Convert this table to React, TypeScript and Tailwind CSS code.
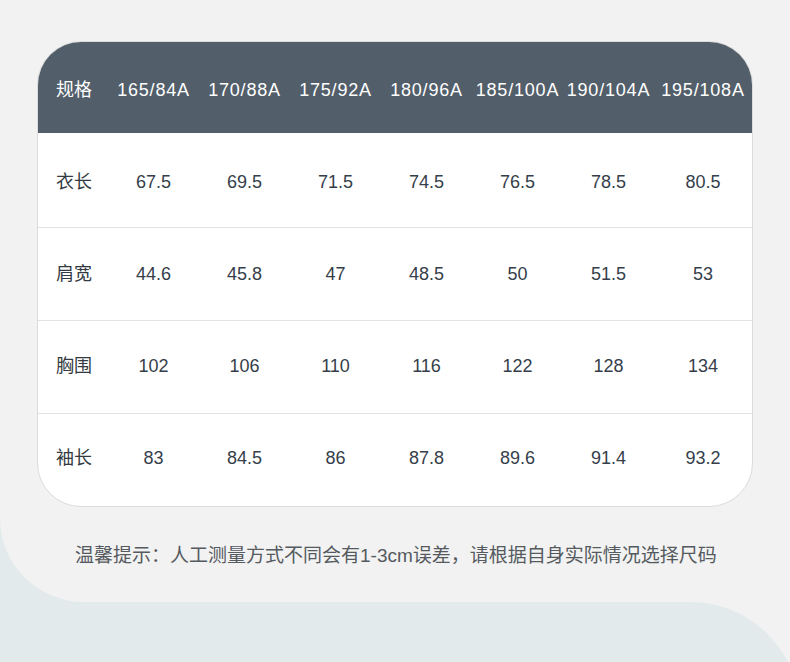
const sizes = ["165/84A", "170/88A", "175/92A", "180/96A", "185/100A", "190/104A", "195/108A"]

const rows = [
  { label: "衣长", values: ["67.5", "69.5", "71.5", "74.5", "76.5", "78.5", "80.5"], h: "h-[94px] pt-[5px]" },
  { label: "肩宽", values: ["44.6", "45.8", "47", "48.5", "50", "51.5", "53"], h: "h-[93px]" },
  { label: "胸围", values: ["102", "106", "110", "116", "122", "128", "134"], h: "h-[93px] pb-[2px]" },
  { label: "袖长", values: ["83", "84.5", "86", "87.8", "89.6", "91.4", "93.2"], h: "h-[93px] pb-[4px]" },
]

const font = "font-['Liberation_Sans','Noto_Sans_CJK_SC',sans-serif]"

export default function App() {
  return (
    <div className={`w-[790px] h-[662px] overflow-hidden bg-[#f2f2f2] ${font}`}>
      {/* top panel */}
      <div className="bg-[#e3eaec]">
        <div className="h-[602px] rounded-bl-[84px] bg-[#f2f2f2] px-[37px] pt-[41px]">
          <div className="overflow-hidden rounded-[44px] border border-[#dcdcdc] bg-white">
            <div className="flex h-[91px] items-center bg-[#525e69] pt-[6px] text-[18px] tracking-[0.8px] text-white">
              <div className="w-[70px] shrink-0 pl-[18px] tracking-normal">规格</div>
              {sizes.map((s, i) => (
                <div key={s} className={`${i === 6 ? "flex-1" : "w-[91px]"} shrink-0 text-center`}>
                  {s}
                </div>
              ))}
            </div>
            {rows.map((r, ri) => (
              <div
                key={r.label}
                className={`flex ${r.h} items-center text-[18px] ${ri > 0 ? "border-t border-[#e3e3e3]" : ""}`}
              >
                <div className="w-[70px] shrink-0 pl-[18px] text-[#333a42]">{r.label}</div>
                {r.values.map((v, i) => (
                  <div key={i} className={`${i === 6 ? "flex-1" : "w-[91px]"} shrink-0 text-center text-[#353e4a]`}>
                    {v}
                  </div>
                ))}
              </div>
            ))}
          </div>
          <p className="mt-[35px] pl-[38px] text-[19px] text-[#555a60]">
            温馨提示：人工测量方式不同会有1-3cm误差，请根据自身实际情况选择尺码
          </p>
        </div>
      </div>
      {/* bottom band */}
      <div className="h-[60px] overflow-hidden">
        <div className="h-[120px] w-[800px] rounded-tr-[110px] bg-[#e3eaec]" />
      </div>
    </div>
  )
}
